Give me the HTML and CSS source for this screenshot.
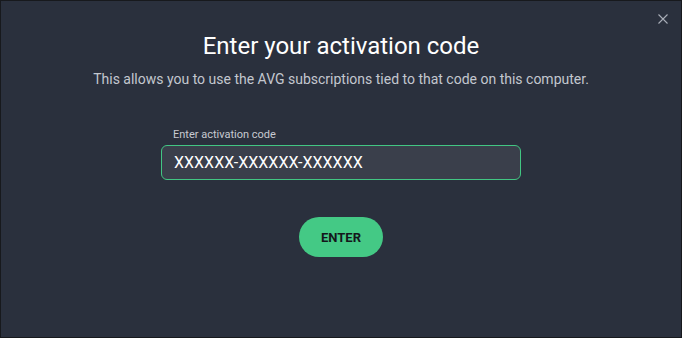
FILE: index.html
```html
<!DOCTYPE html>
<html>
<head>
<meta charset="utf-8">
<link rel="stylesheet" href="styles.css">
</head>
<body>
<div class="dialog">
  <button class="close" aria-label="Close">
    <svg width="10" height="10" viewBox="0 0 10 10"><path d="M0.5 0.5L9.5 9.5M9.5 0.5L0.5 9.5" stroke="#a9aeb8" stroke-width="1.1" fill="none"/></svg>
  </button>
  <h1 class="title">Enter your activation code</h1>
  <p class="subtitle">This allows you to use the AVG subscriptions tied to that code on this computer.</p>
  <div class="field">
    <label class="label">Enter activation code</label>
    <div class="input">XXXXXX-XXXXXX-XXXXXX</div>
  </div>
  <button class="enter">ENTER</button>
</div>
</body>
</html>
```

FILE: styles.css
```css
html, body {
  margin: 0;
  padding: 0;
  background: #17191d;
}
body {
  width: 682px;
  height: 338px;
  font-family: Roboto, "Liberation Sans", sans-serif;
}
.dialog {
  position: relative;
  box-sizing: border-box;
  width: 680px;
  height: 336px;
  margin: 1px;
  background: #2a303d;
  display: flex;
  flex-direction: column;
  align-items: center;
}
.close {
  position: absolute;
  top: 13px;
  right: 13px;
  width: 10px;
  height: 10px;
  padding: 0;
  border: 0;
  background: none;
  display: flex;
}
.title {
  margin: 30px 0 0;
  font-size: 24px;
  font-weight: 400;
  color: #ffffff;
  line-height: 30px;
}
.subtitle {
  margin: 9px 0 0;
  font-size: 14px;
  color: #c3c7cf;
  line-height: 18px;
}
.field {
  margin-top: 40px;
  width: 360px;
  display: flex;
  flex-direction: column;
}
.label {
  font-size: 11px;
  color: #c7cad1;
  line-height: 14px;
  padding-left: 12px;
  margin-bottom: 3px;
}
.input {
  box-sizing: border-box;
  height: 35px;
  border: 1px solid #42c683;
  border-radius: 6px;
  background: #3a3f4b;
  color: #ffffff;
  font-size: 16px;
  line-height: 33px;
  padding-left: 12px;
}
.enter {
  margin-top: 37px;
  width: 84px;
  height: 40px;
  border: 0;
  border-radius: 20px;
  background: #44c985;
  color: #14171b;
  font-family: Roboto, "Liberation Sans", sans-serif;
  font-weight: 700;
  font-size: 13px;
  padding: 0;
}
```
